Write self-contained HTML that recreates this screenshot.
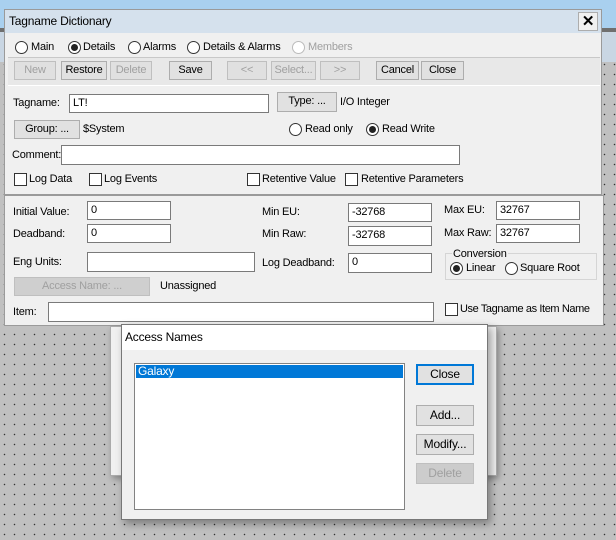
<!DOCTYPE html>
<html><head><meta charset="utf-8"><style>
*{box-sizing:border-box;margin:0;padding:0}
body{width:616px;height:540px;position:relative;overflow:hidden;font-family:"Liberation Sans",sans-serif;font-size:11px;letter-spacing:-0.2px;color:#000;
background-color:#c0c0c0;background-image:radial-gradient(circle at 4.5px 4.5px,#333 0.6px,transparent 0.9px);background-size:10px 10px;background-position:0 0}
.a{position:absolute}
.t{position:absolute;white-space:nowrap;line-height:13px}
.btn{position:absolute;background:#e1e1e1;border:1px solid #adadad;text-align:center;line-height:17px;white-space:nowrap}
.dis{color:#a0a0a0;background:#e0e0e0;border-color:#bfbfbf}
.inp{position:absolute;background:#fff;border:1px solid #7a7a7a;padding-left:3px;padding-top:1px;line-height:15px}
.rad{position:absolute;width:13px;height:13px;border:1px solid #333;border-radius:50%;background:#fff}
.rad.on::after{content:"";position:absolute;left:2px;top:2px;width:7px;height:7px;border-radius:50%;background:#222}
.chk{position:absolute;width:13px;height:13px;border:1px solid #333;background:#fff}
</style></head><body>
<div class="a" style="left:0;top:0;width:616px;height:28px;background:#a9d0ef"></div>
<div class="a" style="left:0;top:28px;width:616px;height:4px;background:#6f6f6f"></div>
<div class="a" style="left:0;top:32px;width:616px;height:30px;background:#c9d6e3"></div>
<!-- main dialog -->
<div class="a" style="left:4px;top:9px;width:598px;height:186px;background:#f0f0f0;border:1px solid #9a9a9a"></div>
<div class="a" style="left:5px;top:10px;width:596px;height:23px;background:#d5e1ed"></div>
<div class="t" style="left:9px;top:15px;font-size:12px">Tagname Dictionary</div>
<div class="btn" style="left:578px;top:12px;width:20px;height:19px;background:#f0f0f0;font-weight:bold;font-size:15px;line-height:17px">✕</div>
<div class="rad" style="left:15px;top:41px"></div><div class="t" style="left:31px;top:41px">Main</div>
<div class="rad on" style="left:68px;top:41px"></div><div class="t" style="left:83px;top:41px">Details</div>
<div class="rad" style="left:128px;top:41px"></div><div class="t" style="left:143px;top:41px">Alarms</div>
<div class="rad" style="left:187px;top:41px"></div><div class="t" style="left:203px;top:41px">Details &amp; Alarms</div>
<div class="rad" style="left:292px;top:41px;border-color:#bbb"></div><div class="t" style="left:308px;top:41px;color:#a0a0a0">Members</div>
<div class="a" style="left:8px;top:57px;width:592px;height:29px;border-top:1px solid #c8c8c8;border-bottom:1px solid #fff;background:#e8e8e8"></div>
<div class="btn dis" style="left:14px;top:61px;width:42px;height:19px">New</div>
<div class="btn" style="left:61px;top:61px;width:46px;height:19px">Restore</div>
<div class="btn dis" style="left:110px;top:61px;width:42px;height:19px">Delete</div>
<div class="btn" style="left:169px;top:61px;width:43px;height:19px">Save</div>
<div class="btn dis" style="left:227px;top:61px;width:40px;height:19px">&lt;&lt;</div>
<div class="btn dis" style="left:271px;top:61px;width:45px;height:19px">Select...</div>
<div class="btn dis" style="left:320px;top:61px;width:40px;height:19px">&gt;&gt;</div>
<div class="btn" style="left:376px;top:61px;width:43px;height:19px">Cancel</div>
<div class="btn" style="left:421px;top:61px;width:43px;height:19px">Close</div>
<div class="t" style="left:13px;top:97px">Tagname:</div>
<div class="inp" style="left:69px;top:94px;width:200px;height:19px">LT!</div>
<div class="btn" style="left:277px;top:92px;width:60px;height:20px">Type: ...</div>
<div class="t" style="left:340px;top:96px">I/O Integer</div>
<div class="btn" style="left:14px;top:120px;width:66px;height:19px">Group: ...</div>
<div class="t" style="left:83px;top:123px">$System</div>
<div class="rad" style="left:289px;top:123px"></div><div class="t" style="left:305px;top:123px">Read only</div>
<div class="rad on" style="left:366px;top:123px"></div><div class="t" style="left:382px;top:123px">Read Write</div>
<div class="t" style="left:12px;top:149px">Comment:</div>
<div class="inp" style="left:61px;top:145px;width:399px;height:20px"></div>
<div class="chk" style="left:14px;top:173px"></div><div class="t" style="left:29px;top:173px">Log Data</div>
<div class="chk" style="left:89px;top:173px"></div><div class="t" style="left:104px;top:173px">Log Events</div>
<div class="chk" style="left:247px;top:173px"></div><div class="t" style="left:262px;top:173px">Retentive Value</div>
<div class="chk" style="left:345px;top:173px"></div><div class="t" style="left:361px;top:173px">Retentive Parameters</div>
<!-- panel 2 -->
<div class="a" style="left:4px;top:195px;width:600px;height:131px;background:#f0f0f0;border:1px solid #9a9a9a"></div>
<div class="t" style="left:13px;top:206px">Initial Value:</div>
<div class="inp" style="left:87px;top:201px;width:84px;height:19px">0</div>
<div class="t" style="left:13px;top:228px">Deadband:</div>
<div class="inp" style="left:87px;top:224px;width:84px;height:19px">0</div>
<div class="t" style="left:13px;top:256px">Eng Units:</div>
<div class="inp" style="left:87px;top:252px;width:168px;height:20px"></div>
<div class="btn dis" style="left:14px;top:277px;width:136px;height:19px;background:#cfcfcf">Access Name: ...</div>
<div class="t" style="left:160px;top:280px">Unassigned</div>
<div class="t" style="left:13px;top:306px">Item:</div>
<div class="inp" style="left:48px;top:302px;width:386px;height:20px"></div>
<div class="t" style="left:262px;top:206px">Min EU:</div>
<div class="inp" style="left:348px;top:203px;width:84px;height:19px">-32768</div>
<div class="t" style="left:262px;top:228px">Min Raw:</div>
<div class="inp" style="left:348px;top:226px;width:84px;height:20px">-32768</div>
<div class="t" style="left:262px;top:257px">Log Deadband:</div>
<div class="inp" style="left:348px;top:253px;width:84px;height:20px">0</div>
<div class="t" style="left:444px;top:204px">Max EU:</div>
<div class="inp" style="left:496px;top:201px;width:84px;height:19px">32767</div>
<div class="t" style="left:444px;top:227px">Max Raw:</div>
<div class="inp" style="left:496px;top:224px;width:84px;height:19px">32767</div>
<div class="a" style="left:445px;top:253px;width:152px;height:27px;border:1px solid #d5d5d5"></div>
<div class="t" style="left:452px;top:248px;background:#f0f0f0;padding:0 1px">Conversion</div>
<div class="rad on" style="left:450px;top:262px"></div><div class="t" style="left:466px;top:262px">Linear</div>
<div class="rad" style="left:505px;top:262px"></div><div class="t" style="left:520px;top:262px">Square Root</div>
<div class="chk" style="left:445px;top:303px"></div><div class="t" style="left:460px;top:303px;letter-spacing:-0.4px">Use Tagname as Item Name</div>
<!-- background window -->
<div class="a" style="left:110px;top:326px;width:387px;height:150px;background:#f0f0f0;border:1px solid #aaa;box-shadow:2px 3px 6px rgba(0,0,0,.3)"></div>
<!-- Access names -->
<div class="a" style="left:121px;top:324px;width:367px;height:196px;background:#f0f0f0;border:1px solid #777;box-shadow:3px 4px 8px rgba(0,0,0,.35)"></div>
<div class="a" style="left:122px;top:325px;width:365px;height:25px;background:#fff"></div>
<div class="t" style="left:125px;top:331px;font-size:12px">Access Names</div>
<div class="a" style="left:134px;top:363px;width:271px;height:147px;background:#fff;border:1px solid #828282"></div>
<div class="a" style="left:136px;top:365px;width:267px;height:13px;background:#0078d7"></div>
<div class="t" style="left:138px;top:365px;color:#fff;font-size:12px">Galaxy</div>
<div class="btn" style="left:416px;top:364px;width:58px;height:21px;border:2px solid #0078d7;line-height:17px;font-size:12px">Close</div>
<div class="btn" style="left:416px;top:405px;width:58px;height:21px;line-height:19px;font-size:12px">Add...</div>
<div class="btn" style="left:416px;top:434px;width:58px;height:21px;line-height:19px;font-size:12px">Modify...</div>
<div class="btn dis" style="left:416px;top:463px;width:58px;height:21px;line-height:19px;font-size:12px;background:#ccc">Delete</div>
</body></html>
